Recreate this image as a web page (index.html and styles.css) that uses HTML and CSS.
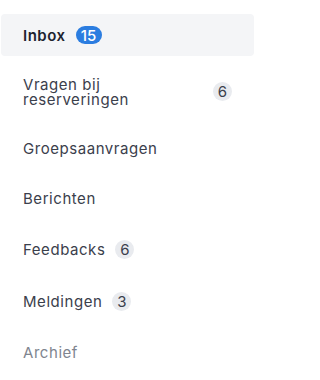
FILE: index.html
```html
<!DOCTYPE html>
<html lang="nl">
<head>
<meta charset="utf-8">
<link rel="stylesheet" href="styles.css">
</head>
<body>
<nav class="menu">
  <a class="item active"><span class="label">Inbox</span><span class="badge blue">15</span></a>
  <a class="item wide"><span class="label">Vragen bij reserveringen</span><span class="badge">6</span></a>
  <a class="item"><span class="label">Groepsaanvragen</span></a>
  <a class="item"><span class="label">Berichten</span></a>
  <a class="item"><span class="label">Feedbacks</span><span class="badge">6</span></a>
  <a class="item"><span class="label">Meldingen</span><span class="badge">3</span></a>
  <a class="item muted"><span class="label">Archief</span></a>
</nav>
</body>
</html>
```
FILE: styles.css
```css
html, body { margin: 0; padding: 0; background: #fff; }
body { width: 261px; font-family: Inter, "Noto Sans", sans-serif; }
.menu {
  display: flex;
  flex-direction: column;
  gap: 8.6px;
  width: 253px;
  margin: 0 0 0 1px;
  padding-top: 14px;
}
.item {
  display: flex;
  align-items: center;
  gap: 10px;
  min-height: 42px;
  padding: 12px 22px;
  border-radius: 4px;
  color: #3b404c;
  font-size: 15px;
  line-height: 15px;
  letter-spacing: 0.55px;
  box-sizing: border-box;
}
.item.active { background: #f4f5f7; color: #1d2330; }
.item.active .label { font-weight: 600; letter-spacing: 0.5px; }
.item.wide .label { flex: 1; }
.item.muted { color: #80858f; }
.badge {
  display: inline-flex;
  align-items: center;
  justify-content: center;
  flex: none;
  min-width: 19px;
  height: 19px;
  padding: 0 4px;
  box-sizing: border-box;
  border-radius: 10px;
  background: #e9ebef;
  color: #3b404c;
  font-size: 15px;
  letter-spacing: 0;
  font-weight: 400;
}
.badge.blue { background: #2b7de0; color: #fff; font-weight: 500; min-width: 26px; height: 18px; }
```
